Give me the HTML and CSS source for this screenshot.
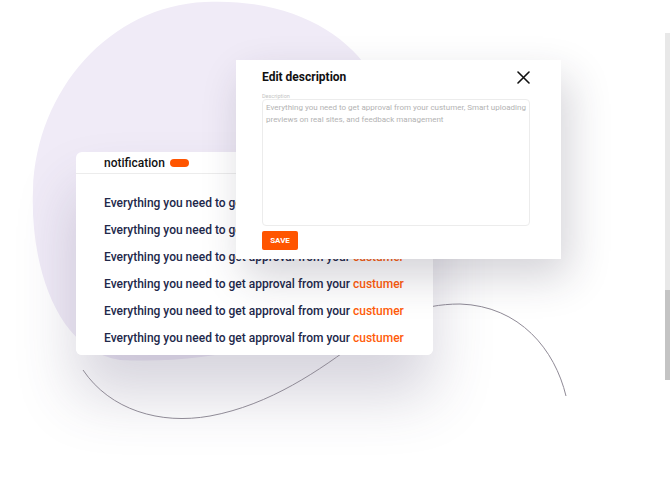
FILE: index.html
```html
<!DOCTYPE html>
<html>
<head>
<meta charset="utf-8">
<link rel="stylesheet" href="styles.css">
</head>
<body>
<div class="stage">
  <svg class="blob" width="670" height="494" viewBox="0 0 670 494">
    <path d="M205,2 C285,-2 345,30 372,75 L380,260 C330,340 220,365 120,360 C55,350 30,262 33,190 C36,90 110,6 205,2 Z" fill="#f0ebf7"/>
  </svg>
  <svg class="line" width="670" height="494" viewBox="0 0 670 494">
    <path d="M83,370 C110,410 160,425 210,416 C270,405 320,370 360,340 C390,318 420,304 460,304 C520,306 555,350 566,396" fill="none" stroke="#8f8a96" stroke-width="1"/>
  </svg>
  <div class="scroll"><div class="thumb"></div></div>

  <div class="notif">
    <div class="notif-head">
      <span class="notif-title">notification</span>
      <span class="pill"></span>
    </div>
    <ul class="notif-list">
      <li>Everything you need to get approval from your <span class="hl">custumer</span></li>
      <li>Everything you need to get approval from your <span class="hl">custumer</span></li>
      <li>Everything you need to get approval from your <span class="hl">custumer</span></li>
      <li>Everything you need to get approval from your <span class="hl">custumer</span></li>
      <li>Everything you need to get approval from your <span class="hl">custumer</span></li>
      <li>Everything you need to get approval from your <span class="hl">custumer</span></li>
    </ul>
  </div>

  <div class="modal">
    <div class="modal-head">
      <span class="modal-title">Edit description</span>
      <svg class="close" width="13" height="13" viewBox="0 0 13 13"><path d="M1 1 L12 12 M12 1 L1 12" stroke="#111" stroke-width="1.6" stroke-linecap="round"/></svg>
    </div>
    <div class="label">Description</div>
    <div class="textarea">Everything you need to get approval from your custumer, Smart uploading previews on real sites, and feedback management</div>
    <div class="actions"><button class="save">SAVE</button></div>
  </div>
</div>
</body>
</html>
```
FILE: styles.css
```css
html, body {
  margin: 0;
  padding: 0;
  background: #ffffff;
  font-family: Roboto, "Liberation Sans", sans-serif;
}
.stage {
  position: relative;
  z-index: 0;
  width: 670px;
  height: 494px;
  overflow: hidden;
}
.blob {
  position: absolute;
  left: 0;
  top: 0;
  z-index: -2;
}
.line {
  position: absolute;
  left: 0;
  top: 0;
}
.scroll {
  position: absolute;
  left: 665px;
  top: 33px;
  width: 5px;
  height: 347px;
  background: #e8e8e8;
  display: flex;
  flex-direction: column;
  justify-content: flex-end;
}
.thumb {
  height: 90px;
  background: #c4c4c4;
}
.notif {
  position: absolute;
  left: 76px;
  top: 152px;
  width: 357px;
  height: 203px;
  background: #fff;
  border-radius: 6px;
}
.notif::before {
  content: "";
  position: absolute;
  inset: 0;
  z-index: -1;
  border-radius: 6px;
  box-shadow: 0 40px 60px rgba(70, 60, 100, 0.22);
}
.notif-head {
  height: 21px;
  border-bottom: 1px solid #ececec;
  display: flex;
  align-items: center;
  padding-left: 28px;
  gap: 5px;
}
.notif-title {
  font-size: 12px;
  font-weight: 500;
  color: #111;
}
.pill {
  width: 19px;
  height: 8px;
  border-radius: 4px;
  background: #ff5500;
}
.notif-list {
  list-style: none;
  margin: 0;
  padding: 16px 0 0 28px;
}
.notif-list li {
  height: 27px;
  line-height: 27px;
  font-size: 12px;
  font-weight: 500;
  color: #22284a;
}
.hl {
  color: #ff5c0a;
}
.modal {
  position: absolute;
  left: 236px;
  top: 60px;
  width: 325px;
  height: 199px;
  background: #fff;
  box-shadow: 8px 18px 40px rgba(40, 35, 60, 0.2);
  padding: 1px 31px 0 26px;
  box-sizing: border-box;
  display: flex;
  flex-direction: column;
}
.modal-head {
  display: flex;
  justify-content: space-between;
  align-items: center;
  height: 32px;
}
.modal-title {
  font-size: 12px;
  font-weight: 700;
  color: #111;
}
.label {
  font-size: 5.5px;
  color: #c4c4c4;
  height: 6px;
  line-height: 6px;
}
.textarea {
  height: 127px;
  border: 1px solid #ececec;
  border-radius: 4px;
  box-sizing: border-box;
  padding: 2px 3px;
  font-size: 8px;
  line-height: 12px;
  color: #b3b3b3;
}
.actions {
  display: flex;
  margin-top: 5px;
}
.save {
  border: none;
  background: #ff5500;
  color: #fff;
  font-family: Roboto, "Liberation Sans", sans-serif;
  font-size: 8px;
  font-weight: 700;
  width: 36px;
  height: 19px;
  border-radius: 2px;
  padding: 0;
}
```
